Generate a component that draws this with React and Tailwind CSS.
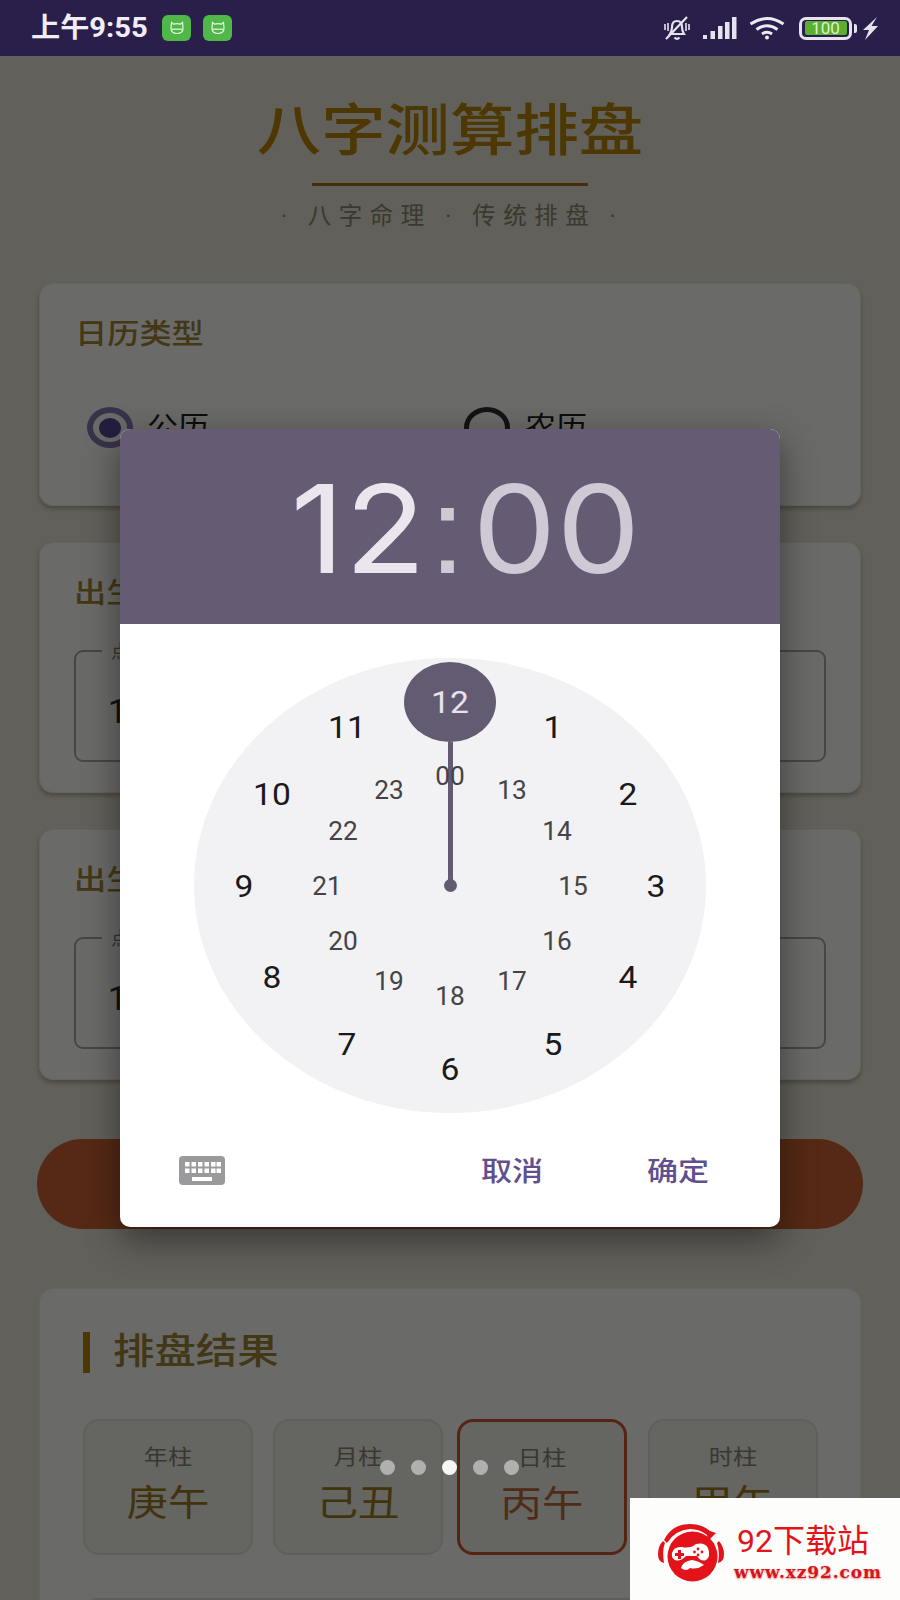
import React from "react";

const cx = 256;
const cy = 227.5;
const outer = [1, 2, 3, 4, 5, 6, 7, 8, 9, 10, 11];
const inner = [13, 14, 15, 16, 17, 18, 19, 20, 21, 22, 23, 0];

function pos(h, rx, ry) {
  const a = ((h % 12) * Math.PI) / 6;
  return { left: cx + rx * Math.sin(a), top: cy - ry * Math.cos(a) };
}

function Stretch({ children, className = "" }) {
  return <span className={"inline-block scale-x-[1.15] origin-center whitespace-nowrap " + className}>{children}</span>;
}

function Digit({ children }) {
  return <span className="inline-block scale-x-[1.05] origin-center whitespace-nowrap">{children}</span>;
}

function CatBadge() {
  return (
    <div className="w-[29px] h-[26px] rounded-[6px] bg-[#4fb848] flex items-center justify-center">
      <svg width="18" height="16" viewBox="0 0 18 16" fill="none" stroke="#e9f7e6" strokeWidth="1.2">
        <path d="M3.5 2.5 L5.5 4.2 Q9 3.2 12.5 4.2 L14.5 2.5 L15 8 Q15 13.5 9 13.5 Q3 13.5 3 8 Z" />
        <path d="M4 9.2 H14" />
      </svg>
    </div>
  );
}

function StatusRight() {
  return (
    <div className="flex items-center">
      <svg width="30" height="27" viewBox="0 0 30 27" fill="none" stroke="#e6e2ee" strokeWidth="2.2" className="mr-[11px]">
        <path d="M8 19 Q10 16 10 12 Q10 6 15 6 Q20 6 20 12 Q20 16 22 19 Z" />
        <path d="M12.5 22.5 Q15 25 17.5 22.5" />
        <path d="M3 9 V15 M6 8 V16 M27 9 V15 M24 8 V16" strokeWidth="1.6" />
        <path d="M25 2 L4 24" strokeWidth="2.2" />
      </svg>
      <svg width="34" height="23" viewBox="0 0 34 23" fill="#e6e2ee" className="mr-[11px]">
        <rect x="0" y="18" width="4" height="4" />
        <rect x="7.5" y="14" width="4.5" height="8" />
        <rect x="15" y="9" width="4.5" height="13" />
        <rect x="22" y="5" width="4.5" height="17" />
        <rect x="29" y="0" width="4.5" height="22" />
      </svg>
      <svg width="38" height="24" viewBox="0 0 37 24" fill="none" stroke="#eeeaf4" strokeWidth="3" className="mr-[13px]">
        <path d="M2 8 Q18.5 -3 35 8" />
        <path d="M8 13.5 Q18.5 6 29 13.5" />
        <path d="M13.5 18 Q18.5 14.5 23.5 18" />
        <circle cx="18.5" cy="21.5" r="2" fill="#eeeaf4" stroke="none" />
      </svg>
      <div className="w-[53px] h-[23px] rounded-[7px] border-[3px] border-[#e6e2ee] p-[1.5px] mr-[2px]">
        <div className="w-[42px] h-full mx-auto rounded-[2px] bg-[#5cae2e] flex items-center justify-center text-[17px] leading-none text-[#dff0d2]">
          100
        </div>
      </div>
      <div className="w-[3px] h-[9px] rounded-r-[2px] bg-[#e6e2ee] mr-[5px]" />
      <svg width="16" height="23" viewBox="0 0 16 23" fill="#e6e2ee" className="mr-[22px]">
        <path d="M15 0 L1 13 H7 L3 23 L16 9 H9.5 Z" />
      </svg>
    </div>
  );
}

function CardTitle({ children }) {
  return (
    <div className="h-[34px] leading-[34px] text-[28px] text-[#a08536] font-medium">
      <Stretch className="origin-left">{children}</Stretch>
    </div>
  );
}

function InputCard({ title, value, mt }) {
  return (
    <section className={"h-[251px] rounded-[14px] bg-white/90 border border-[#efece0] shadow-[0_3px_4px_rgba(120,100,60,0.45)] pt-[34px] px-[34px] " + mt}>
      <div>
        <CardTitle>{title}</CardTitle>
      </div>
      <div className="relative mt-[39px] h-[112px] rounded-[9px] border-2 border-[#a8a8aa] pl-[32px] pt-[12px] flex items-center">
        <span className="absolute left-[26px] -top-[9px] h-[18px] leading-[18px] pl-[9px] pr-[12px] bg-[#fcfcfb] text-[19px] text-[#80807c]">
          点击选择
        </span>
        <span className="text-[33px] text-[#2a2a2a]">{value}</span>
      </div>
    </section>
  );
}

function Pillar({ label, value, selected, className = "" }) {
  return (
    <div
      className={
        "w-[170px] h-[136px] rounded-[16px] flex flex-col items-center bg-[#f1f0e9] pt-[21px] " +
        (selected ? "border-[3px] border-[#c75a2b] " : "border-2 border-[#e6e2d4] ") +
        className
      }
    >
      <Stretch className="text-[21px] leading-[30px] text-[#8c8474]">{label}</Stretch>
      <Stretch className={"text-[36px] leading-[48px] mt-[8px] " + (selected ? "text-[#bb6a3a]" : "text-[#9c7a1c]")}>{value}</Stretch>
    </div>
  );
}

function Logo() {
  return (
    <svg width="85" height="85" viewBox="0 0 85 85" className="absolute left-[20px] top-[12px]">
      <g fill="#e2131a">
        <circle cx="42.5" cy="46.5" r="25" />
        <path d="M8 44 Q8 36 13 31 L15 33 Q12 40 14 53 Q8 52 8 44 Z" />
        <path d="M74 44 Q74 37 69 31 L67 33 Q70 42 68 53 Q74 52 74 44 Z" />
        <path d="M14 30 Q22 14 40 14 Q52 14 60 21 L66 23 L58 31 L57 25 Q50 19 40 19 Q25 20 17 33 Z" />
      </g>
      <g fill="#fff">
        <path d="M22 43 Q24 36 32 37 Q40 39 46 34 Q55 32 58 38 Q61 47 56 50 Q51 52 47 46 L36 46 Q30 52 25 50 Q21 48 22 43 Z" />
        <path d="M31 58 Q33 51 42 50 Q49 51 54 55 Q47 60 40 58 Q36 62 31 58 Z" />
      </g>
      <g fill="#e2131a">
        <path d="M28 40 h3 v3 h3 v3 h-3 v3 h-3 v-3 h-3 v-3 h3 Z" />
        <circle cx="48" cy="39" r="1.4" />
        <circle cx="52" cy="42" r="1.4" />
        <circle cx="48" cy="45" r="1.4" />
        <circle cx="44.5" cy="42" r="1.4" />
      </g>
    </svg>
  );
}

export default function App() {
  return (
    <div className="relative w-[900px] h-[1600px] overflow-hidden bg-[#e8e5d6] font-['Roboto','Noto_Sans_CJK_SC',sans-serif]">
      <header className="relative z-20 h-[56px] bg-[#2a1f4a] flex items-center justify-between pl-[31px]">
        <div className="flex items-center">
          <span className="inline-block w-[117px] text-[27px] font-bold text-[#f1edf6] whitespace-nowrap scale-x-[1.08] origin-left">上午9:55</span>
          <div className="ml-[14px]"><CatBadge /></div>
          <div className="ml-[12px]"><CatBadge /></div>
        </div>
        <StatusRight />
      </header>

      <main className="px-[39px]">
        <div className="pt-[38px] flex flex-col items-center">
          <Stretch className="text-[56px] leading-[64px] font-medium text-[#b8860b] font-['Noto_Sans_CJK_SC',sans-serif]">八字测算排盘</Stretch>
          <div className="w-[276px] h-[3px] mt-[25px] bg-[#a8701a]" />
          <div className="mt-[15px] pl-[4px] text-[23.5px] leading-[30px] text-[#8d866e] whitespace-nowrap tracking-[7.5px]">
            · 八字命理 · 传统排盘 ·
          </div>
        </div>

        <section className="mt-[52px] h-[223px] rounded-[14px] bg-white/90 border border-[#efece0] shadow-[0_3px_4px_rgba(120,100,60,0.45)] pt-[34px] pl-[35px]">
          <CardTitle>日历类型</CardTitle>
          <div className="mt-[55px] grid grid-cols-[377px_1fr] pl-[12px]">
            <div className="flex items-center">
              <div className="w-[46px] h-[41px] rounded-[50%] border-[6px] border-[#857aae] flex items-center justify-center">
                <div className="w-[22px] h-[20px] rounded-[50%] bg-[#5a4596]" />
              </div>
              <Stretch className="ml-[18px] text-[27px] text-[#1d1d1d]">公历</Stretch>
            </div>
            <div className="flex items-center">
              <div className="w-[46px] h-[41px] rounded-[50%] border-[5px] border-[#2e2e2e]" />
              <Stretch className="ml-[19px] text-[27px] text-[#1d1d1d]">农历</Stretch>
            </div>
          </div>
        </section>

        <InputCard title="出生日期" value="1990-01-01" mt="mt-[36px]" />
        <InputCard title="出生时间" value="12:00" mt="mt-[36px]" />

        <div className="-mx-[2px] w-[826px] mt-[59px] h-[90px] rounded-full bg-[#cb6233]" />

        <section className="mt-[59px] h-[400px] rounded-[14px] bg-white/90 border border-[#efece0] pt-[43px] pl-[43px]">
          <div className="flex items-center h-[41px]">
            <div className="w-[7px] h-[41px] bg-[#b8860b]" />
            <Stretch className="ml-[23px] origin-left text-[36px] leading-[41px] font-medium text-[#a08536]">排盘结果</Stretch>
          </div>
          <div className="mt-[46px] flex">
            <Pillar label="年柱" value="庚午" />
            <Pillar label="月柱" value="己丑" className="ml-[20px]" />
            <Pillar label="日柱" value="丙午" selected className="ml-[14px]" />
            <Pillar label="时柱" value="甲午" className="ml-[21px]" />
          </div>
          <div className="mt-[43px] mr-[44px] h-[80px] rounded-[14px] border-2 border-[#e6e2d4]" />
        </section>
      </main>

      <div className="absolute inset-x-0 top-[56px] bottom-0 z-10 bg-black/[0.58]" />

      <div className="absolute z-20 left-[120px] top-[429px] w-[660px] h-[798px] rounded-[10px] overflow-hidden bg-white shadow-[0_12px_36px_rgba(0,0,0,0.45)]">
        <div className="h-[195px] pt-[7px] pl-[30px] bg-[#655c74] flex items-center justify-center text-[122px] leading-none font-['Inter',sans-serif]">
          <span className="inline-block scale-x-[1.09] whitespace-nowrap">
            <span className="text-[#ebe6ee]">12</span>
            <span className="ml-[3px] mr-[6px] text-[#cfc9d6] font-['Liberation_Sans',sans-serif]">:</span>
            <span className="text-[#cfc9d6]">00</span>
          </span>
        </div>

        <div className="relative mt-[34px] mx-auto w-[512px] h-[455px] rounded-[50%] bg-[#f2f2f4]">
          <div className="absolute left-[253.5px] top-[84px] w-[5px] h-[144px] bg-[#635b72]" />
          <div className="absolute left-[250px] top-[221px] w-[13px] h-[13px] rounded-full bg-[#635b72]" />
          <div className="absolute left-[210px] top-[4px] w-[92px] h-[80px] rounded-[50%] bg-[#635b72] flex items-center justify-center">
            <span className="text-[32px] text-[#e8e2ee]">
              <Digit>12</Digit>
            </span>
          </div>
          {outer.map((h) => (
            <div
              key={h}
              style={pos(h, 206, 183)}
              className="absolute -translate-x-1/2 -translate-y-1/2 text-[32px] leading-none text-[#1a1a1a]"
            >
              <Digit>{h}</Digit>
            </div>
          ))}
          {inner.map((h) => (
            <div
              key={h}
              style={pos(h, 123, 110)}
              className="absolute -translate-x-1/2 -translate-y-1/2 text-[25px] leading-none text-[#444446]"
            >
              <Digit>{h === 0 ? "00" : h}</Digit>
            </div>
          ))}
        </div>

        <div className="h-[114px] pt-[4px] flex items-center pl-[59px] pr-[75px]">
          <svg width="46" height="29" viewBox="0 0 46 29" className="-mt-[4px]">
            <rect width="46" height="29" rx="4" fill="#9a9a9c" />
            <g fill="#fff">
              {[6, 12.5, 19, 25.5, 32, 37.5].map((x) => (
                <rect key={"a" + x} x={x} y="6" width="4.5" height="4.5" />
              ))}
              {[6, 12.5, 19, 25.5, 32, 37.5].map((x) => (
                <rect key={"b" + x} x={x} y="12.5" width="4.5" height="4.5" />
              ))}
              <rect x="13" y="21" width="20" height="4" />
            </g>
          </svg>
          <span className="ml-auto text-[27px] font-medium text-[#5f4f8f]">
            <Stretch>取消</Stretch>
          </span>
          <span className="ml-[112px] text-[27px] font-medium text-[#5f4f8f]">
            <Stretch>确定</Stretch>
          </span>
        </div>
      </div>

      <div className="absolute z-30 left-[380px] top-[1460px] flex gap-[16px]">
        <div className="w-[15px] h-[15px] rounded-full bg-[#b0b0ae]" />
        <div className="w-[15px] h-[15px] rounded-full bg-[#b0b0ae]" />
        <div className="w-[15px] h-[15px] rounded-full bg-[#f5f5f3]" />
        <div className="w-[15px] h-[15px] rounded-full bg-[#b0b0ae]" />
        <div className="w-[15px] h-[15px] rounded-full bg-[#b0b0ae]" />
      </div>

      <div className="absolute z-30 left-[630px] top-[1498px] w-[270px] h-[102px] bg-[#fdfdfb]">
        <Logo />
        <div className="absolute left-[107px] top-[19px] text-[32px] leading-[48px] text-[#e2131a] whitespace-nowrap">92下载站</div>
        <div className="absolute left-[104px] top-[66px] text-[17px] leading-[16px] font-bold tracking-[0.9px] text-[#d9131a] font-['DejaVu_Serif',serif] whitespace-nowrap [text-shadow:0_1px_2px_rgba(200,0,0,0.5)]">
          www.xz92.com
        </div>
      </div>
    </div>
  );
}
